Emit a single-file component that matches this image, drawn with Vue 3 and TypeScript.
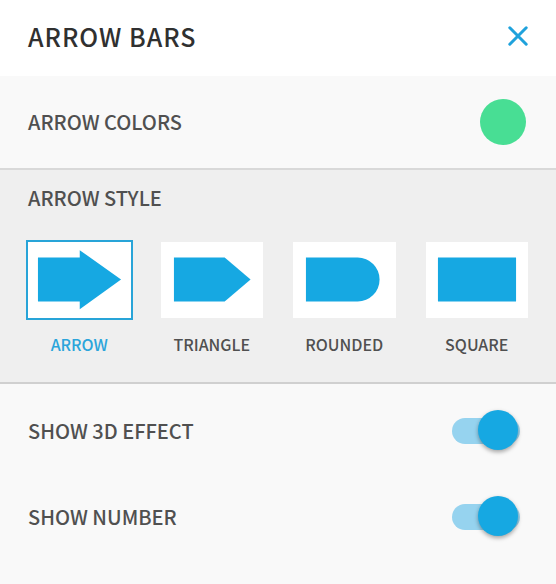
<script setup lang="ts">
import { ref } from 'vue'

interface ArrowStyle {
  id: string
  label: string
  path: string
}

const styles: ArrowStyle[] = [
  { id: 'arrow', label: 'ARROW', path: 'M10 15.5H52V8L93.5 37.5L52 67.5V59.5H10Z' },
  { id: 'triangle', label: 'TRIANGLE', path: 'M13 15.5H64L90 37.5L64 59.5H13Z' },
  { id: 'rounded', label: 'ROUNDED', path: 'M13 15.5H65A22 22 0 0 1 65 59.5H13Z' },
  { id: 'square', label: 'SQUARE', path: 'M12 15.5H90.5V59.5H12Z' },
]

const selected = ref('arrow')
const show3d = ref(true)
const showNumber = ref(true)
</script>

<template>
  <main class="panel">
    <header class="header">
      <h1 class="title">ARROW BARS</h1>
      <button class="close" type="button" aria-label="Close">
        <svg viewBox="0 0 20 20" width="20" height="20" aria-hidden="true">
          <path d="M1.8 1.8L18.2 18.2M18.2 1.8L1.8 18.2" />
        </svg>
      </button>
    </header>

    <section class="row colors">
      <span id="colors-label" class="label">ARROW COLORS</span>
      <button class="swatch" type="button" aria-labelledby="colors-label"></button>
    </section>

    <fieldset class="styles" aria-labelledby="style-label">
      <h2 id="style-label" class="label">ARROW STYLE</h2>
      <div class="options">
        <label v-for="s in styles" :key="s.id" class="option">
          <input v-model="selected" class="radio" type="radio" name="arrow-style" :value="s.id" />
          <span class="tile">
            <svg class="shape" viewBox="0 0 103 76" aria-hidden="true"><path :d="s.path" /></svg>
          </span>
          <span class="name">{{ s.label }}</span>
        </label>
      </div>
    </fieldset>

    <section class="toggles">
      <div class="row toggle-row">
        <label class="label" for="show-3d">SHOW 3D EFFECT</label>
        <input id="show-3d" v-model="show3d" class="toggle" type="checkbox" />
      </div>
      <div class="row toggle-row">
        <label class="label" for="show-number">SHOW NUMBER</label>
        <input id="show-number" v-model="showNumber" class="toggle" type="checkbox" />
      </div>
    </section>
  </main>
</template>

<style>
body {
  margin: 0;
  background: #f9f9f9;
}
</style>

<style scoped>
.panel {
  box-sizing: border-box;
  min-height: 100vh;
  background: #f9f9f9;
  color: #505050;
  font-family: "Noto Sans CJK SC", "Noto Sans", sans-serif;
  font-weight: 500;
}

.header {
  display: flex;
  align-items: center;
  justify-content: space-between;
  box-sizing: border-box;
  height: 76px;
  padding: 0 28px 4px;
  background: #fff;
}

.title {
  margin: 0;
  color: #303030;
  font-size: 25px;
  font-weight: 500;
  line-height: 32px;
  letter-spacing: 1px;
}

.close {
  display: flex;
  padding: 0;
  border: 0;
  background: none;
  cursor: pointer;
}

.close path {
  fill: none;
  stroke: #1fa2dc;
  stroke-width: 3;
  stroke-linecap: round;
}

.row {
  display: flex;
  align-items: center;
  justify-content: space-between;
}

.label {
  margin: 0;
  font-size: 20px;
  font-weight: 500;
  line-height: 28px;
}

.colors {
  height: 92px;
  padding: 0 30px 0 28px;
  border-bottom: 2px solid #d9d9d9;
}

.swatch {
  width: 46px;
  height: 46px;
  padding: 0;
  border: 0;
  border-radius: 50%;
  background: #48de94;
  cursor: pointer;
}

.styles {
  min-width: 0;
  margin: 0;
  padding: 14px 28px 25px;
  border: 0;
  border-bottom: 2px solid #d0d0d0;
  background: #efefef;
}

.options {
  display: grid;
  grid-template-columns: repeat(4, 1fr);
  gap: 30px;
  margin-top: 30px;
}

.option {
  position: relative;
  display: flex;
  flex-direction: column;
  gap: 13px;
  cursor: pointer;
}

.radio {
  position: absolute;
  margin: 0;
  opacity: 0;
}

.tile {
  display: flex;
  justify-content: center;
  height: 76px;
  background: #fff;
}

.shape {
  width: 100%;
  height: 76px;
}

.shape path {
  fill: #16a8e2;
}

.name {
  font-size: 16px;
  line-height: 26px;
  text-align: center;
}

.radio:checked + .tile {
  outline: 2px solid #28a4d8;
}

.radio:checked ~ .name {
  color: #2ba5db;
}

.toggles {
  padding: 4px 0 24px;
}

.toggle-row {
  height: 86px;
  padding: 0 36px 0 28px;
}

.toggle {
  position: relative;
  appearance: none;
  width: 68px;
  height: 26px;
  margin: 0;
  border-radius: 13px;
  background: #c4c4c4;
  cursor: pointer;
}

.toggle::before {
  content: "";
  position: absolute;
  top: -8px;
  left: 2px;
  width: 40px;
  height: 40px;
  border-radius: 50%;
  background: #fff;
  box-shadow: 0 2px 4px rgba(0, 0, 0, 0.35);
}

.toggle:checked {
  background: #96d3ef;
}

.toggle:checked::before {
  left: 26px;
  background: #16a8e2;
}
</style>
